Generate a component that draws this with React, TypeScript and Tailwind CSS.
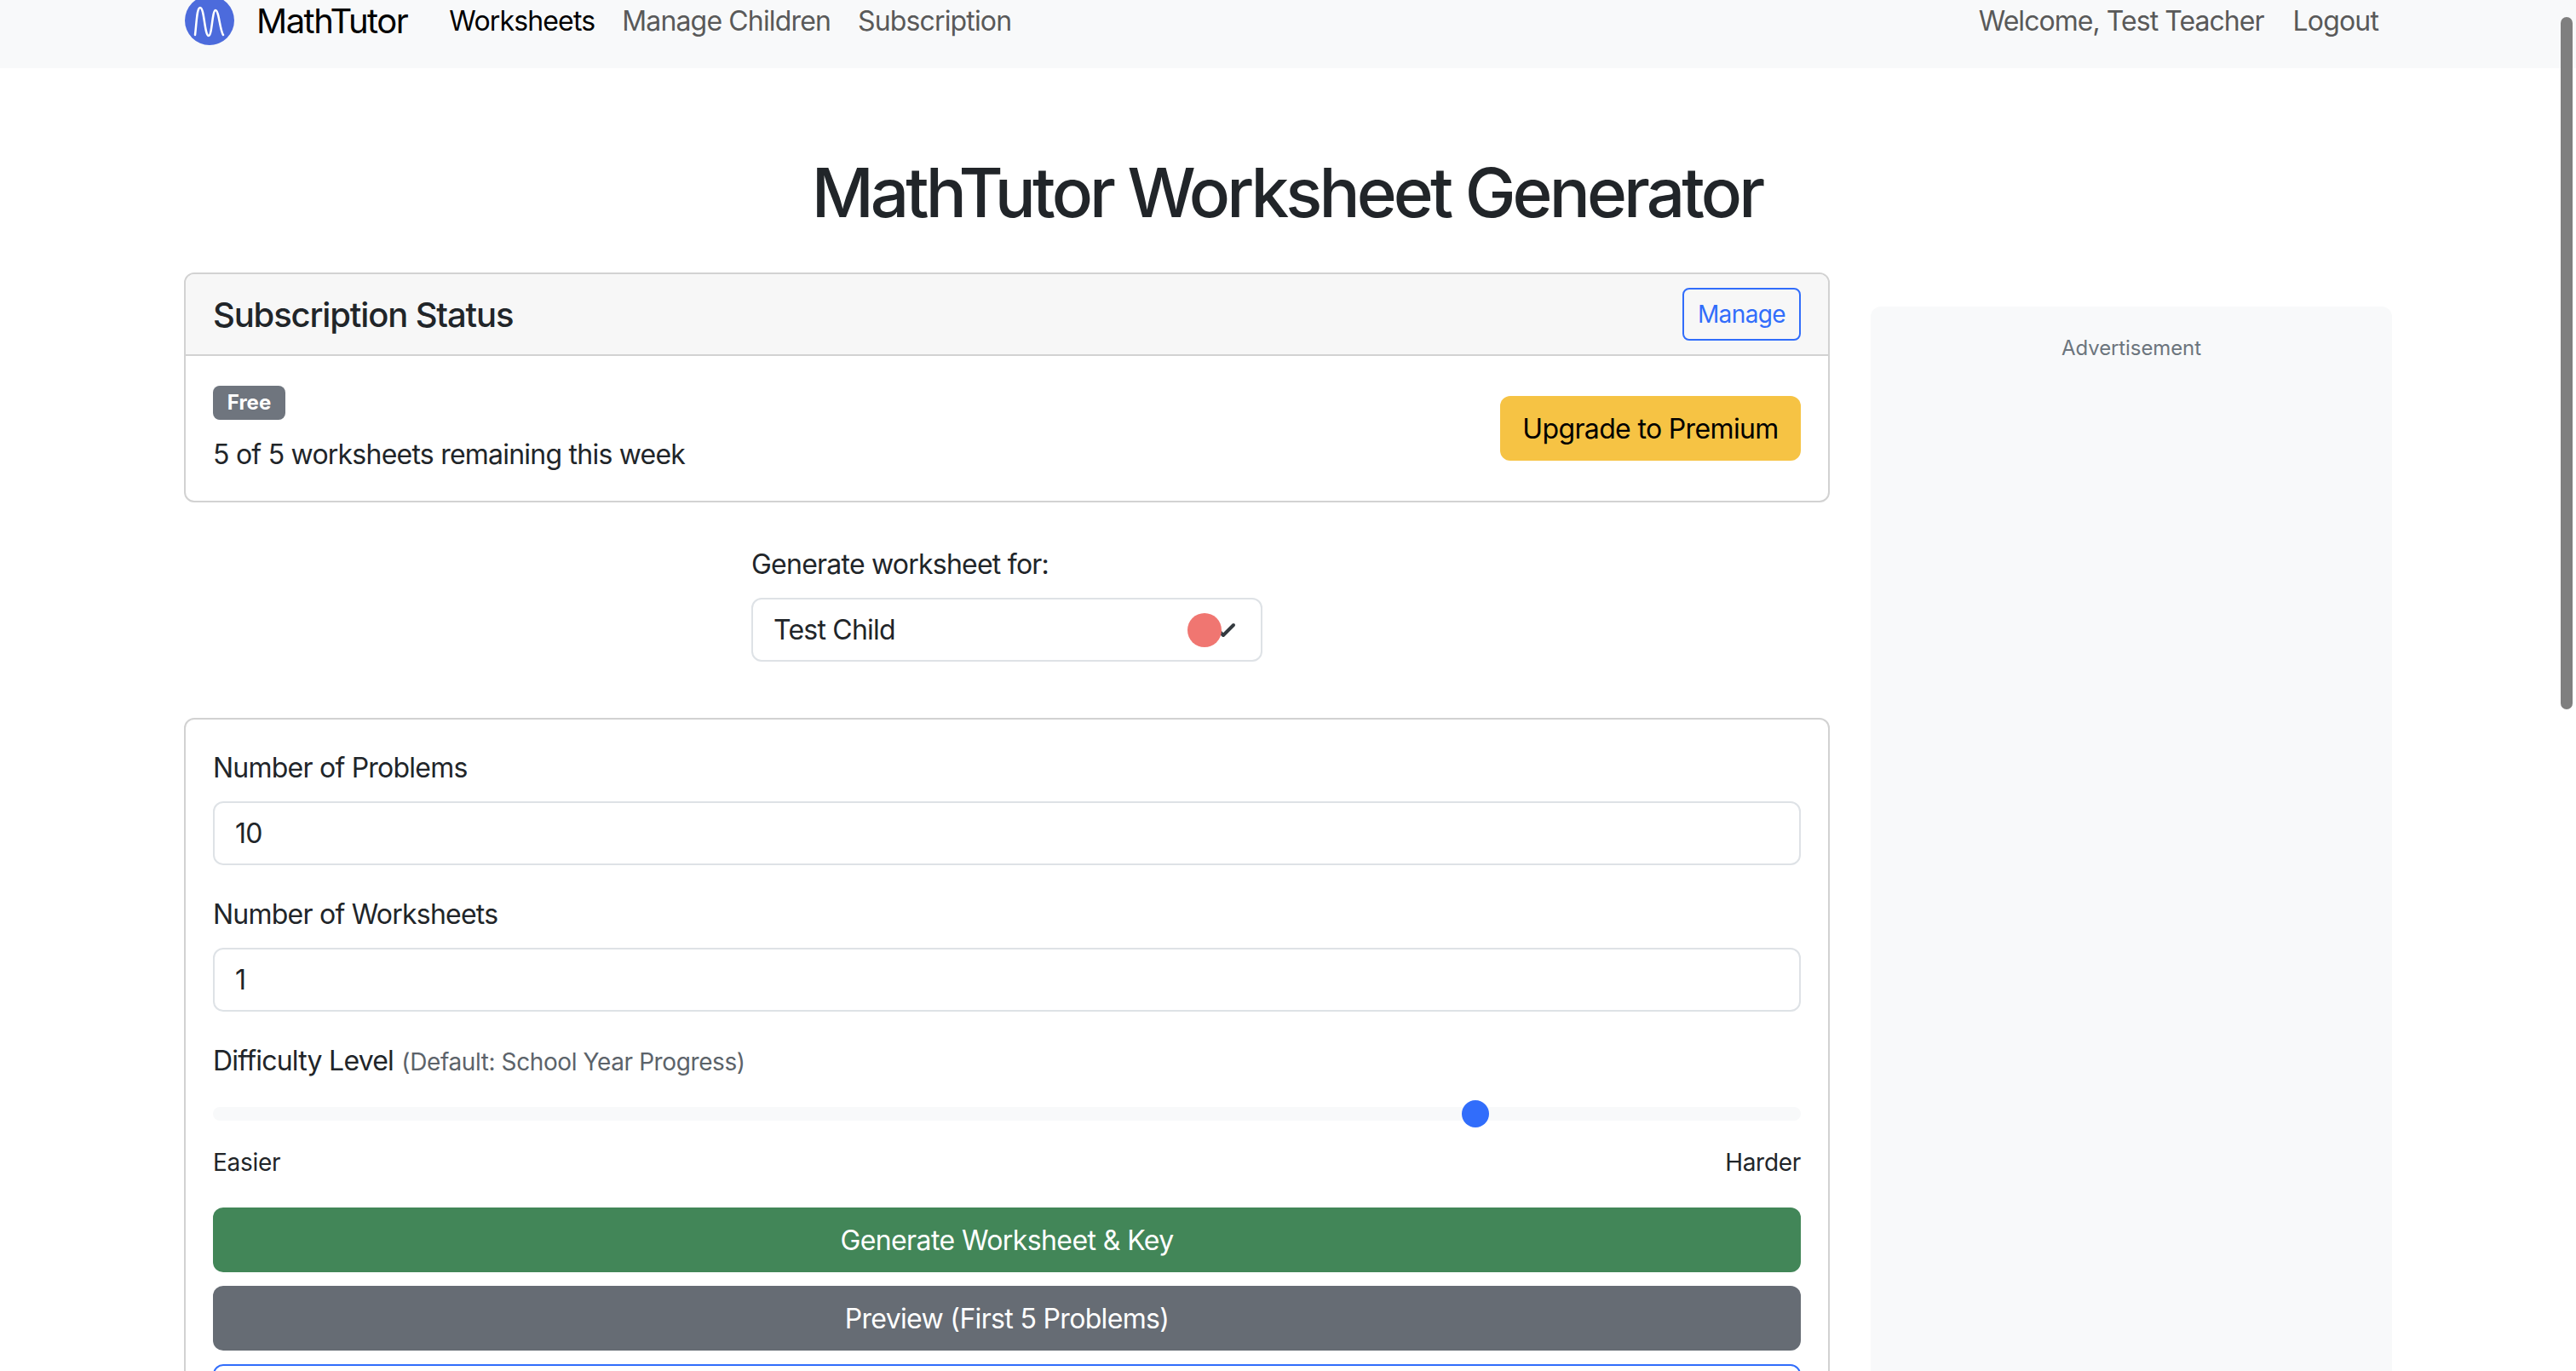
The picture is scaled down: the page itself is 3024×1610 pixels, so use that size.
function Logo() {
  return (
    <svg viewBox="0 0 58 58" className="w-[58px] h-[58px] shrink-0 ml-px -mt-[2px]">
      <circle cx="29" cy="29" r="29" fill="#4c6bdc" />
      <path
        d="M12 46C14 30 14 14 18 14C23 14 23 47 28 47C32 47 32 17 36 17C40 17 41 40 45 46"
        fill="none"
        stroke="#fff"
        strokeWidth="2.5"
        strokeLinecap="round"
      />
    </svg>
  );
}

function Navbar() {
  return (
    <nav className="h-20 bg-[#f8f9fa] flex items-center justify-between pb-[30px] pl-[216px] pr-[232px] text-[32px] text-[#595959] leading-[48px] tracking-[-0.85px]">
      <div className="flex items-center">
        <Logo />
        <span className="ml-[26px] text-[40px] text-black tracking-[-1.5px]">MathTutor</span>
        <div className="flex ml-[49px] gap-8">
          <span className="text-black">Worksheets</span>
          <span>Manage Children</span>
          <span>Subscription</span>
        </div>
      </div>
      <div className="flex gap-[34px]">
        <span className="tracking-[-0.95px]">Welcome, Test Teacher</span>
        <span>Logout</span>
      </div>
    </nav>
  );
}

function SubscriptionCard() {
  return (
    <div className="border-2 border-[#d2d2d2] rounded-xl overflow-hidden">
      <div className="h-[96px] bg-[#f7f7f7] border-b-2 border-[#d2d2d2] flex items-center justify-between px-8">
        <h5 className="pt-px text-[40px] font-medium leading-[48px] tracking-[-1.15px]">Subscription Status</h5>
        <button className="h-[62px] w-[139px] rounded-lg border-2 border-[#316dfb] text-[#316dfb] text-[28px] tracking-[-0.6px]">
          Manage
        </button>
      </div>
      <div className="h-[170px] flex items-center justify-between px-8">
        <div className="flex flex-col items-start mt-1">
          <span className="h-10 w-[85px] rounded-lg bg-[#6f757e] text-white text-2xl font-bold tracking-normal flex items-center justify-center">
            Free
          </span>
          <p className="mt-[17px] text-[32px] leading-[48px]">5 of 5 worksheets remaining this week</p>
        </div>
        <button className="h-[76px] w-[353px] pt-[2px] rounded-xl bg-[#f6c344] text-black text-[32px] tracking-[-0.65px]">
          Upgrade to Premium
        </button>
      </div>
    </div>
  );
}

function ChildPicker() {
  return (
    <div className="w-[600px] mx-auto mt-[49px] mb-[66px]">
      <label className="block text-[32px] leading-[48px] mb-[15px]">Generate worksheet for:</label>
      <div className="relative h-[75px] border-2 border-[#dee2e6] rounded-xl flex items-center justify-between pl-6 pr-[28px] text-[32px]">
        <span className="pt-px">Test Child</span>
        <svg viewBox="0 0 16 16" className="w-8 h-8" fill="none" stroke="#343a40" strokeWidth="2" strokeLinecap="round" strokeLinejoin="round">
          <path d="m2 5 6 6 6-6" />
        </svg>
        <span className="absolute left-[510px] top-4 w-10 h-10 rounded-full bg-[#f07671]" />
      </div>
    </div>
  );
}

function NumberField({ label, value }: { label: string; value: string }) {
  return (
    <div className="mb-8">
      <label className="block pt-[2px] text-[32px] leading-[48px] mb-[15px]">{label}</label>
      <input
        readOnly
        value={value}
        className="block w-full h-[75px] border-2 border-[#dee2e6] rounded-xl px-6 text-[32px] outline-none"
      />
    </div>
  );
}

function DifficultySlider() {
  return (
    <div>
      <label className="block pt-[2px] text-[32px] leading-[48px]">
        Difficulty Level <small className="ml-px text-[28px] text-[#5c636a] tracking-[-0.4px]">(Default: School Year Progress)</small>
      </label>
      <div className="relative h-4 mt-[29px] bg-[#f8f9fa] rounded-full">
        <span className="absolute left-[1466px] -top-2 w-8 h-8 rounded-full bg-[#316dfb]" />
      </div>
      <div className="flex justify-between mt-7 text-[28px] leading-[42px] tracking-[-0.3px]">
        <span>Easier</span>
        <span>Harder</span>
      </div>
    </div>
  );
}

function WorksheetForm() {
  return (
    <div className="border-2 border-[#d2d2d2] rounded-xl pt-[31px] px-8 pb-8">
      <NumberField label="Number of Problems" value="10" />
      <NumberField label="Number of Worksheets" value="1" />
      <DifficultySlider />
      <div className="flex flex-col gap-4 mt-8">
        <button className="h-[76px] pt-[2px] rounded-xl bg-[#428658] text-white text-[32px] tracking-[-0.6px]">Generate Worksheet &amp; Key</button>
        <button className="h-[76px] pt-[2px] rounded-xl bg-[#666c74] text-white text-[32px] tracking-[-0.67px]">Preview (First 5 Problems)</button>
        <button className="h-[76px] rounded-xl border-2 border-[#316dfb]" />
      </div>
    </div>
  );
}

export default function App() {
  return (
    <div className="relative h-[1610px] overflow-hidden bg-white text-[#212529] tracking-[-0.77px] [font-family:Inter,sans-serif]">
      <Navbar />
      <h1 className="pt-[98px] pr-[3px] mb-[46px] text-center text-[80px] font-medium leading-[96px] tracking-[-3.9px]">
        MathTutor Worksheet Generator
      </h1>
      <div className="flex pl-[216px] gap-12">
        <main className="w-[1932px] shrink-0">
          <SubscriptionCard />
          <ChildPicker />
          <WorksheetForm />
        </main>
        <aside className="w-[612px] h-[1400px] mt-10 pt-8 bg-[#f8f9fa] rounded-xl text-center text-2xl leading-[34px] tracking-[-0.1px] text-[#6c757d]">
          Advertisement
        </aside>
      </div>
      <div className="absolute top-5 right-1 w-[14px] h-[813px] rounded-full bg-[#7f7f7f]" />
    </div>
  );
}
